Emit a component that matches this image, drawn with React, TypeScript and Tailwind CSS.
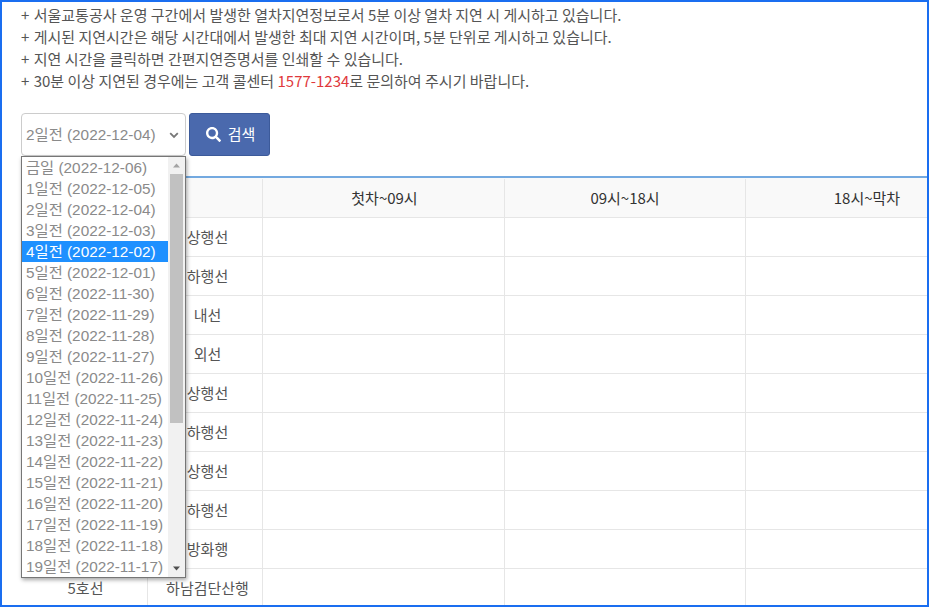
import React from "react";
import { FaSearch } from "react-icons/fa";

const notices = [
  "서울교통공사 운영 구간에서 발생한 열차지연정보로서 5분 이상 열차 지연 시 게시하고 있습니다.",
  "게시된 지연시간은 해당 시간대에서 발생한 최대 지연 시간이며, 5분 단위로 게시하고 있습니다.",
  "지연 시간을 클릭하면 간편지연증명서를 인쇄할 수 있습니다.",
];

const dates = [
  ["금일", "2022-12-06"],
  ["1일전", "2022-12-05"],
  ["2일전", "2022-12-04"],
  ["3일전", "2022-12-03"],
  ["4일전", "2022-12-02"],
  ["5일전", "2022-12-01"],
  ["6일전", "2022-11-30"],
  ["7일전", "2022-11-29"],
  ["8일전", "2022-11-28"],
  ["9일전", "2022-11-27"],
  ["10일전", "2022-11-26"],
  ["11일전", "2022-11-25"],
  ["12일전", "2022-11-24"],
  ["13일전", "2022-11-23"],
  ["14일전", "2022-11-22"],
  ["15일전", "2022-11-21"],
  ["16일전", "2022-11-20"],
  ["17일전", "2022-11-19"],
  ["18일전", "2022-11-18"],
  ["19일전", "2022-11-17"],
];

const rows = [
  ["1호선", "상행선"],
  ["1호선", "하행선"],
  ["2호선", "내선"],
  ["2호선", "외선"],
  ["3호선", "상행선"],
  ["3호선", "하행선"],
  ["4호선", "상행선"],
  ["4호선", "하행선"],
  ["5호선", "방화행"],
  ["5호선", "하남검단산행"],
];

function DateDropdown() {
  return (
    <div className="absolute left-0 top-[43px] z-10 flex w-[165px] border border-[#767676] bg-white shadow-[1px_2px_4px_rgba(0,0,0,0.35)] font-['Liberation_Sans','Noto_Sans_CJK_KR',sans-serif] text-[15.33px] text-[#8a8a8a]">
      <ul className="w-[146px]">
        {dates.map(([label, date]) => (
          <li
            key={date}
            className={`h-[21px] whitespace-nowrap pl-[4px] leading-[21px] ${
              date === "2022-12-02" ? "bg-[#1e90ff] text-white" : ""
            }`}
          >
            {label} ({date})
          </li>
        ))}
      </ul>
      <div className="flex w-[17px] flex-col items-center bg-[#f1f1f1]">
        <svg width="17" height="17" viewBox="0 0 17 17" className="shrink-0">
          <path d="M5 10.5 L8.5 6.5 L12 10.5 Z" fill="#a3a3a3" />
        </svg>
        <div className="h-[249px] w-[13px] bg-[#c1c1c1]" />
        <div className="flex-1" />
        <svg width="17" height="17" viewBox="0 0 17 17" className="shrink-0">
          <path d="M5 6.5 L12 6.5 L8.5 10.5 Z" fill="#505050" />
        </svg>
      </div>
    </div>
  );
}

function SearchBar() {
  return (
    <div className="relative mt-[21px] flex gap-[3px]">
      <div className="flex h-[43px] w-[165px] items-center justify-between rounded-[4px] border border-[#cccccc] pl-[4px] pr-[5px] pt-[1px] font-['Liberation_Sans','Noto_Sans_CJK_KR',sans-serif] text-[15.33px] text-[#8a8a8a]">
        <span className="whitespace-nowrap">2일전 (2022-12-04)</span>
        <svg width="12" height="12" viewBox="0 0 12 12" fill="none">
          <path d="M2.2 4.2 L6 8 L9.8 4.2" stroke="#777777" strokeWidth="1.8" />
        </svg>
      </div>
      <button className="flex h-[43px] w-[81px] items-center justify-center gap-[7px] rounded-[3px] border border-[#3c5a9a] bg-[#4a69ad] pl-[2px] text-[15px] text-white">
        <FaSearch className="text-[15px]" />
        검색
      </button>
      <DateDropdown />
    </div>
  );
}

function DelayTable() {
  return (
    <div className="ml-[1px] mt-[20px] w-[968px] border-t-2 border-[#73a9e0] text-[15px]">
      <div className="grid h-[40px] grid-cols-[241px_242px_241px_244px] border-b border-[#e6e6e6] bg-[#f9f9f9] pt-[1px] text-[#333333]">
        <div className="flex items-center justify-center border-r border-[#e6e6e6]">구분</div>
        <div className="flex items-center justify-center border-r border-[#e6e6e6] pl-[2px]">첫차~09시</div>
        <div className="flex items-center justify-center border-r border-[#e6e6e6]">09시~18시</div>
        <div className="flex items-center justify-center pr-[2px]">18시~막차</div>
      </div>
      {rows.map(([line, direction], i) => (
        <div
          key={i}
          className="grid h-[39px] grid-cols-[126px_115px_242px_241px_244px] border-b border-[#e6e6e6] text-[#555555]"
        >
          <div className="flex items-center justify-center border-r border-[#e6e6e6] pl-[2px]">{line}</div>
          <div className="flex items-center justify-center whitespace-nowrap border-r border-[#e6e6e6] pl-[5px]">{direction}</div>
          <div className="border-r border-[#e6e6e6]" />
          <div className="border-r border-[#e6e6e6]" />
          <div />
        </div>
      ))}
    </div>
  );
}

export default function App() {
  return (
    <div className="h-[607px] w-[929px] overflow-hidden border-2 border-[#1a6ef0] bg-white pl-[19px] pt-[2px] font-['Noto_Sans_CJK_KR','Noto_Sans',sans-serif]">
      <ul className="text-[15px] leading-[22px] text-[#555555]">
        {notices.map((text) => (
          <li key={text} className="whitespace-nowrap">
            <span className="mr-[1px]">+</span> {text}
          </li>
        ))}
        <li className="whitespace-nowrap">
          <span className="mr-[1px]">+</span> 30분 이상 지연된 경우에는 고객 콜센터 <span className="text-[#e0383b]">1577-1234</span>로 문의하여 주시기 바랍니다.
        </li>
      </ul>
      <SearchBar />
      <DelayTable />
    </div>
  );
}
